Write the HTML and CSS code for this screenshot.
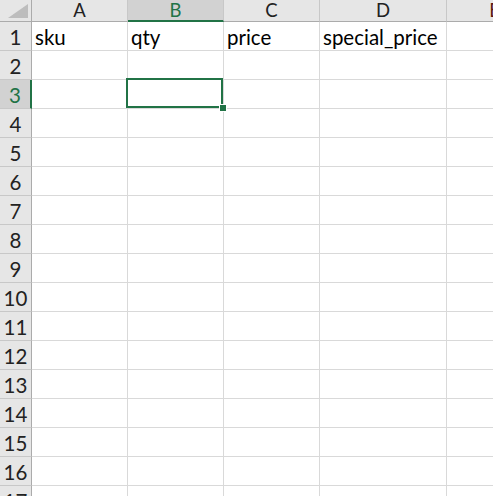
FILE: index.html
```html
<!DOCTYPE html>
<html lang="en">

<head>
    <meta charset="UTF-8">
    <title>Sheet1</title>
    <link rel="stylesheet" href="styles.css">
</head>

<body>
    <div class="sheet">
        <div class="row row-head">
            <div class="corner">
                <svg class="corner-mark" width="20" height="14" viewBox="0 0 20 14">
                    <polygon points="20,0 20,14 0,14" fill="#bdbdbd" />
                </svg>
            </div>
            <div class="col-head">A</div>
            <div class="col-head selected">B</div>
            <div class="col-head">C</div>
            <div class="col-head">D</div>
            <div class="col-head col-e">E</div>
        </div>

        <div class="row">
            <div class="row-num">1</div>
            <div class="cell">sku</div>
            <div class="cell">qty</div>
            <div class="cell">price</div>
            <div class="cell">special_price</div>
            <div class="cell"></div>
        </div>
        <div class="row">
            <div class="row-num">2</div>
            <div class="cell"></div><div class="cell"></div><div class="cell"></div><div class="cell"></div><div class="cell"></div>
        </div>
        <div class="row">
            <div class="row-num selected">3</div>
            <div class="cell"></div>
            <div class="cell active">
                <div class="selection"><span class="fill-handle"></span></div>
            </div>
            <div class="cell"></div><div class="cell"></div><div class="cell"></div>
        </div>
        <div class="row">
            <div class="row-num">4</div>
            <div class="cell"></div><div class="cell"></div><div class="cell"></div><div class="cell"></div><div class="cell"></div>
        </div>
        <div class="row">
            <div class="row-num">5</div>
            <div class="cell"></div><div class="cell"></div><div class="cell"></div><div class="cell"></div><div class="cell"></div>
        </div>
        <div class="row">
            <div class="row-num">6</div>
            <div class="cell"></div><div class="cell"></div><div class="cell"></div><div class="cell"></div><div class="cell"></div>
        </div>
        <div class="row">
            <div class="row-num">7</div>
            <div class="cell"></div><div class="cell"></div><div class="cell"></div><div class="cell"></div><div class="cell"></div>
        </div>
        <div class="row">
            <div class="row-num">8</div>
            <div class="cell"></div><div class="cell"></div><div class="cell"></div><div class="cell"></div><div class="cell"></div>
        </div>
        <div class="row">
            <div class="row-num">9</div>
            <div class="cell"></div><div class="cell"></div><div class="cell"></div><div class="cell"></div><div class="cell"></div>
        </div>
        <div class="row">
            <div class="row-num">10</div>
            <div class="cell"></div><div class="cell"></div><div class="cell"></div><div class="cell"></div><div class="cell"></div>
        </div>
        <div class="row">
            <div class="row-num">11</div>
            <div class="cell"></div><div class="cell"></div><div class="cell"></div><div class="cell"></div><div class="cell"></div>
        </div>
        <div class="row">
            <div class="row-num">12</div>
            <div class="cell"></div><div class="cell"></div><div class="cell"></div><div class="cell"></div><div class="cell"></div>
        </div>
        <div class="row">
            <div class="row-num">13</div>
            <div class="cell"></div><div class="cell"></div><div class="cell"></div><div class="cell"></div><div class="cell"></div>
        </div>
        <div class="row">
            <div class="row-num">14</div>
            <div class="cell"></div><div class="cell"></div><div class="cell"></div><div class="cell"></div><div class="cell"></div>
        </div>
        <div class="row">
            <div class="row-num">15</div>
            <div class="cell"></div><div class="cell"></div><div class="cell"></div><div class="cell"></div><div class="cell"></div>
        </div>
        <div class="row">
            <div class="row-num">16</div>
            <div class="cell"></div><div class="cell"></div><div class="cell"></div><div class="cell"></div><div class="cell"></div>
        </div>
        <div class="row">
            <div class="row-num">17</div>
            <div class="cell"></div><div class="cell"></div><div class="cell"></div><div class="cell"></div><div class="cell"></div>
        </div>
    </div>
</body>

</html>
```

FILE: styles.css
```css
html,
body {
    margin: 0;
    padding: 0;
    background-color: #fff;
    overflow: hidden;
    height: 496px;
}

.sheet {
    font-family: Lato, "Open Sans", sans-serif;
    font-size: 20.5px;
    color: #000;
    width: 600px;
}

.row {
    display: grid;
    grid-template-columns: 32px 96px 96px 96px 127px 96px;
    height: 29px;
}

.row-head {
    height: 22px;
}

.corner {
    box-sizing: border-box;
    background-color: #e6e6e6;
    border-right: 1px solid #ababab;
    border-bottom: 1px solid #ababab;
    display: flex;
    align-items: flex-end;
    justify-content: flex-end;
    padding: 0 3px 3px 0;
}

.corner-mark {
    display: block;
}

.col-head {
    box-sizing: border-box;
    background-color: #e6e6e6;
    border-right: 1px solid #c8c8c8;
    border-bottom: 1px solid #ababab;
    display: flex;
    align-items: center;
    justify-content: center;
    color: #222;
    line-height: 1;
    font-size: 18.5px;
}

.col-head.selected {
    background-color: #d2d2d2;
    color: #217346;
    border-bottom: 2px solid #217346;
}

.col-e {
    color: #5a1a12;
}

.row-num {
    box-sizing: border-box;
    background-color: #e6e6e6;
    border-right: 1px solid #ababab;
    border-bottom: 1px solid #c8c8c8;
    display: flex;
    align-items: flex-end;
    justify-content: center;
    padding-bottom: 3px;
    color: #222;
    line-height: 1;
}

.row-num.selected {
    background-color: #d2d2d2;
    color: #217346;
    border-right: 2px solid #217346;
}

.cell {
    box-sizing: border-box;
    border-right: 1px solid #d9d9d9;
    border-bottom: 1px solid #d9d9d9;
    display: flex;
    align-items: flex-end;
    padding: 0 0 3px 3px;
    line-height: 1;
    white-space: nowrap;
}

.cell.active {
    position: relative;
}

/* selection frame around B3 */
.selection {
    position: absolute;
    left: -2px;
    top: -2px;
    right: 0;
    bottom: 0;
    border: 2px solid #217346;
}

.fill-handle {
    position: absolute;
    right: -6px;
    bottom: -6px;
    width: 6px;
    height: 6px;
    background-color: #217346;
    border: 1px solid #fff;
}
```
